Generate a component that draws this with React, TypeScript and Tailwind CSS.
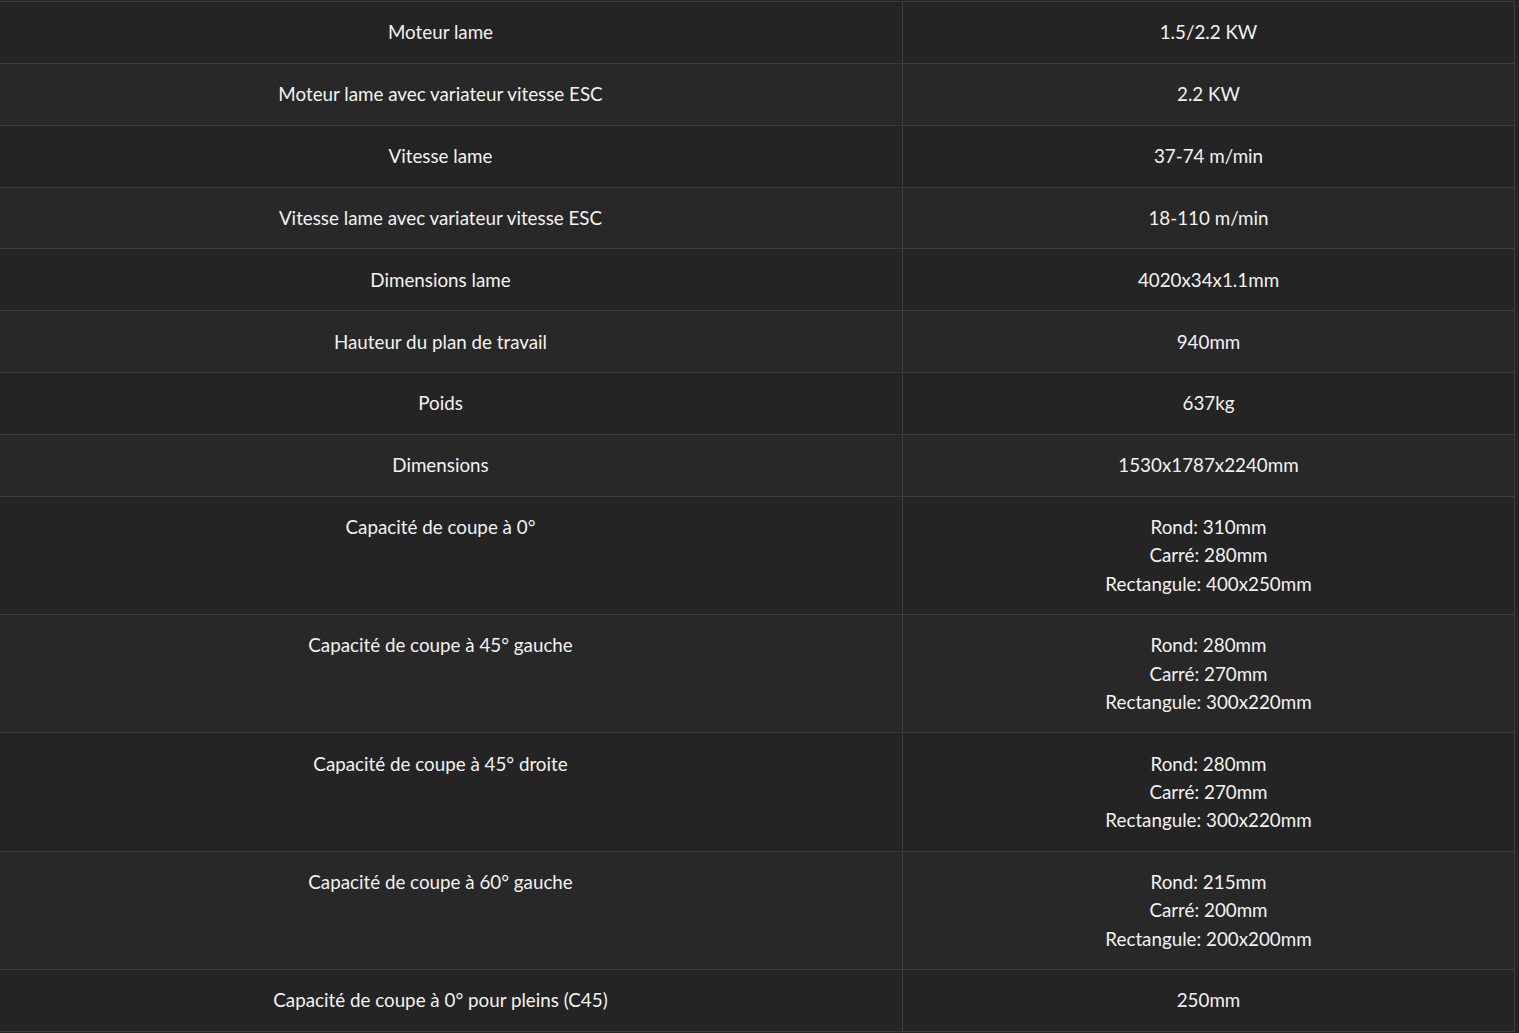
const specs: { label: string; value: string[] }[] = [
  { label: "Moteur lame", value: ["1.5/2.2 KW"] },
  { label: "Moteur lame avec variateur vitesse ESC", value: ["2.2 KW"] },
  { label: "Vitesse lame", value: ["37-74 m/min"] },
  { label: "Vitesse lame avec variateur vitesse ESC", value: ["18-110 m/min"] },
  { label: "Dimensions lame", value: ["4020x34x1.1mm"] },
  { label: "Hauteur du plan de travail", value: ["940mm"] },
  { label: "Poids", value: ["637kg"] },
  { label: "Dimensions", value: ["1530x1787x2240mm"] },
  {
    label: "Capacité de coupe à 0°",
    value: ["Rond: 310mm", "Carré: 280mm", "Rectangule: 400x250mm"],
  },
  {
    label: "Capacité de coupe à 45° gauche",
    value: ["Rond: 280mm", "Carré: 270mm", "Rectangule: 300x220mm"],
  },
  {
    label: "Capacité de coupe à 45° droite",
    value: ["Rond: 280mm", "Carré: 270mm", "Rectangule: 300x220mm"],
  },
  {
    label: "Capacité de coupe à 60° gauche",
    value: ["Rond: 215mm", "Carré: 200mm", "Rectangule: 200x200mm"],
  },
  { label: "Capacité de coupe à 0° pour pleins (C45)", value: ["250mm"] },
];

export default function App() {
  return (
    <div className="min-h-screen overflow-hidden bg-[#242424] pt-px font-['Lato','Liberation_Sans',sans-serif] text-[18.8px] leading-[28.25px] text-[#f2f2f2]">
      <table className="ml-[-22px] w-[1537px] table-fixed border-collapse">
        <tbody>
          {specs.map((row, idx) => (
            <tr
              key={`spec-${idx}`}
              className={idx % 2 === 0 ? "bg-[#242424]" : "bg-[#282828]"}
            >
              <td className="w-[924px] border border-[#3c3c3c] px-4 py-[16.3px] text-center align-top">
                {row.label}
              </td>
              <td className="border border-[#3c3c3c] px-4 py-[16.3px] text-center align-top">
                {row.value.map((line) => (
                  <div key={line}>{line}</div>
                ))}
              </td>
            </tr>
          ))}
        </tbody>
      </table>
    </div>
  );
}
